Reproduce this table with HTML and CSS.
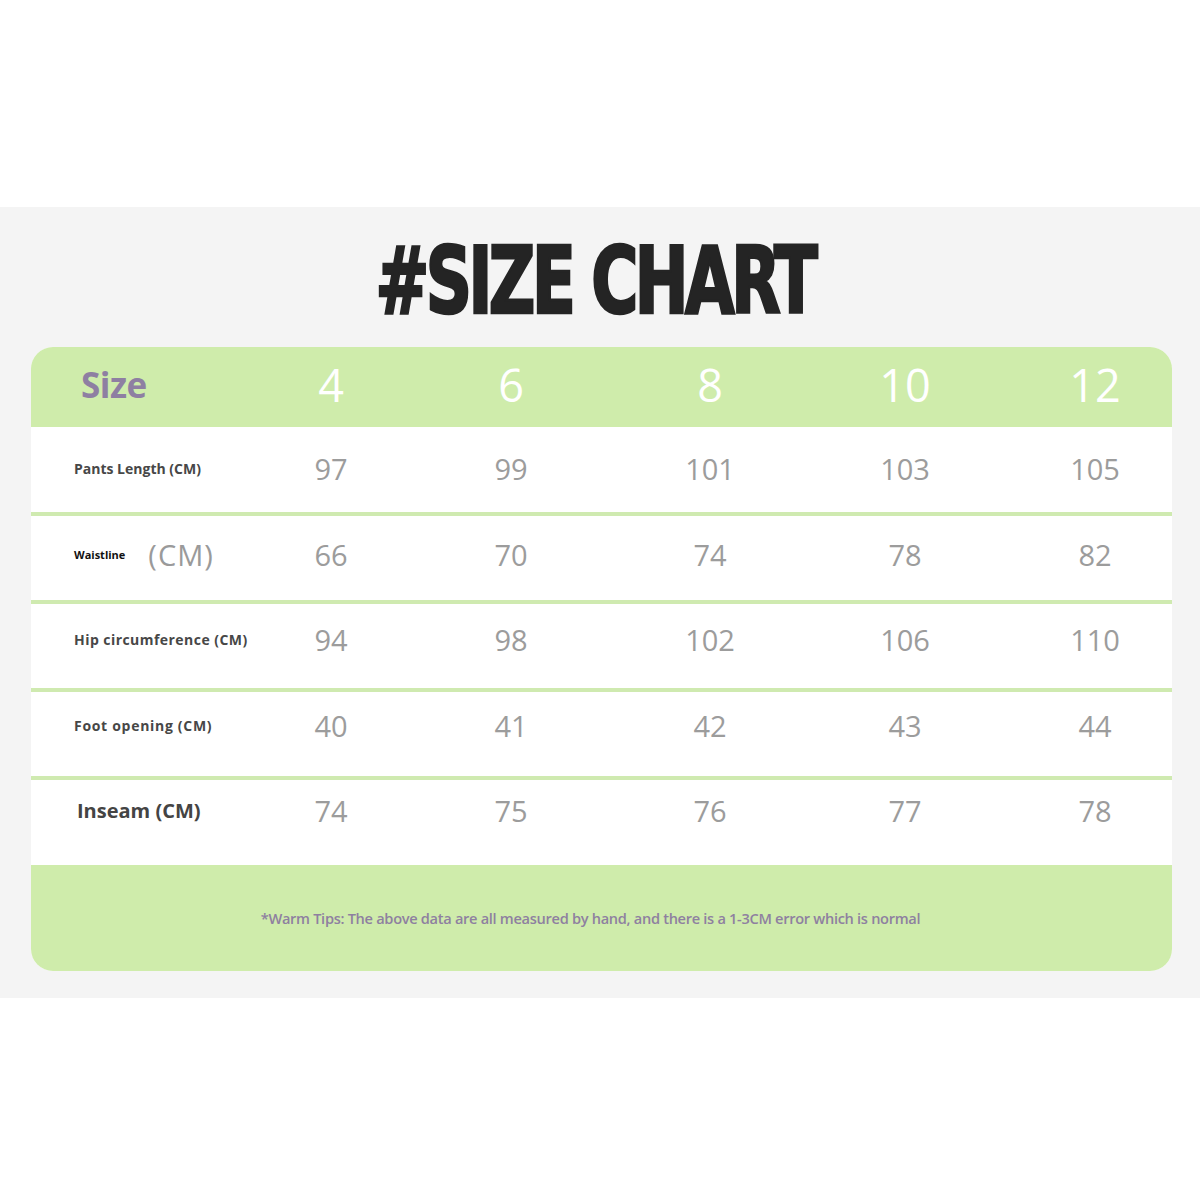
FILE: index.html
```html
<!DOCTYPE html>
<html>
<head>
<meta charset="utf-8">
<link rel="stylesheet" href="styles.css">
</head>
<body>
<div class="band">
  <h1 class="title"><span>#SIZE CHART</span></h1>
  <div class="card">
    <div class="row head">
      <div class="label size">Size</div>
      <div class="col"><span class="cell">4</span></div>
      <div class="col"><span class="cell">6</span></div>
      <div class="col"><span class="cell">8</span></div>
      <div class="col"><span class="cell">10</span></div>
      <div class="col"><span class="cell">12</span></div>
    </div>
    <div class="row r1">
      <div class="label">Pants Length (CM)</div>
      <div class="col"><span class="cell">97</span></div>
      <div class="col"><span class="cell">99</span></div>
      <div class="col"><span class="cell">101</span></div>
      <div class="col"><span class="cell">103</span></div>
      <div class="col"><span class="cell">105</span></div>
    </div>
    <div class="sep"></div>
    <div class="row r2">
      <div class="label"><span class="tiny">Waistline</span><span class="cm">(CM)</span></div>
      <div class="col"><span class="cell">66</span></div>
      <div class="col"><span class="cell">70</span></div>
      <div class="col"><span class="cell">74</span></div>
      <div class="col"><span class="cell">78</span></div>
      <div class="col"><span class="cell">82</span></div>
    </div>
    <div class="sep"></div>
    <div class="row r3">
      <div class="label hip">Hip circumference (CM)</div>
      <div class="col"><span class="cell">94</span></div>
      <div class="col"><span class="cell">98</span></div>
      <div class="col"><span class="cell">102</span></div>
      <div class="col"><span class="cell">106</span></div>
      <div class="col"><span class="cell">110</span></div>
    </div>
    <div class="sep"></div>
    <div class="row r4">
      <div class="label footl">Foot opening (CM)</div>
      <div class="col"><span class="cell">40</span></div>
      <div class="col"><span class="cell">41</span></div>
      <div class="col"><span class="cell">42</span></div>
      <div class="col"><span class="cell">43</span></div>
      <div class="col"><span class="cell">44</span></div>
    </div>
    <div class="sep"></div>
    <div class="row r5">
      <div class="label big">Inseam (CM)</div>
      <div class="col"><span class="cell">74</span></div>
      <div class="col"><span class="cell">75</span></div>
      <div class="col"><span class="cell">76</span></div>
      <div class="col"><span class="cell">77</span></div>
      <div class="col"><span class="cell">78</span></div>
    </div>
    <div class="foot">*Warm Tips: The above data are all measured by hand, and there is a 1-3CM error which is normal</div>
  </div>
</div>
</body>
</html>
```
FILE: styles.css
```css
html, body { margin: 0; padding: 0; background: #ffffff; }
body { font-family: "Open Sans", "Noto Sans", sans-serif; height: 1200px; }
.band {
  margin-top: 207px;
  height: 791px;
  background: #f4f4f4;
  padding: 0 28px 0 31px;
  box-sizing: border-box;
  overflow: hidden;
}
.title {
  margin: 0;
  height: 140px;
  display: flex;
  align-items: center;
  justify-content: center;
  padding-top: 6px;
  padding-right: 14px;
  box-sizing: border-box;
}
.title span {
  font-family: "DejaVu Sans Condensed", "DejaVu Sans", sans-serif;
  font-weight: 700;
  font-size: 62px;
  letter-spacing: -3px;
  color: #242424;
  display: inline-block;
  transform: scale(1.15, 1.5);
  -webkit-text-stroke: 1.8px #242424;
}
.card {
  border-radius: 22px;
  overflow: hidden;
  background: #ffffff;
}
.row {
  display: grid;
  grid-template-columns: 250px 180px 199px 195px 190px 127px;
  align-items: center;
  background: #ffffff;
  height: 85px;
  box-sizing: border-box;
}
.head { background: #cfecab; height: 80px; padding-bottom: 6px; }
.r1 { height: 85px; padding-bottom: 2px; }
.r2 { height: 84px; padding-bottom: 8px; }
.r3 { height: 84px; padding-bottom: 14px; }
.r4 { height: 84px; padding-bottom: 18px; }
.r5 { height: 85px; padding-bottom: 24px; }
.sep { height: 4px; background: #cfeab0; }
.cell {
  display: block;
  width: 100px;
  text-align: center;
  font-size: 29px;
  color: #9c9c9c;
  line-height: 1;
}
.head .cell { color: #ffffff; font-size: 45px; }
.label {
  padding-left: 43px;
  font-weight: 700;
  font-size: 14px;
  color: #474747;
  white-space: nowrap;
  display: flex;
  align-items: center;
}
.label.hip { letter-spacing: 0.45px; }
.label.footl { letter-spacing: 0.7px; }
.label.size {
  padding-left: 50px;
  font-size: 35px;
  color: #8e7fa2;
  letter-spacing: -0.5px;
}
.label.big { font-size: 20px; padding-left: 46px; color: #444; }
.tiny { font-size: 11px; color: #111; }
.cm { font-weight: 400; font-size: 29px; color: #9a9a9a; margin-left: 23px; letter-spacing: 1px; }
.foot {
  background: #cfecab;
  height: 106px;
  display: flex;
  align-items: center;
  justify-content: center;
  font-family: "Open Sans", sans-serif;
  font-weight: 600;
  font-size: 14.6px;
  letter-spacing: -0.3px;
  color: #8e80a0;
  padding-right: 22px;
}
```
